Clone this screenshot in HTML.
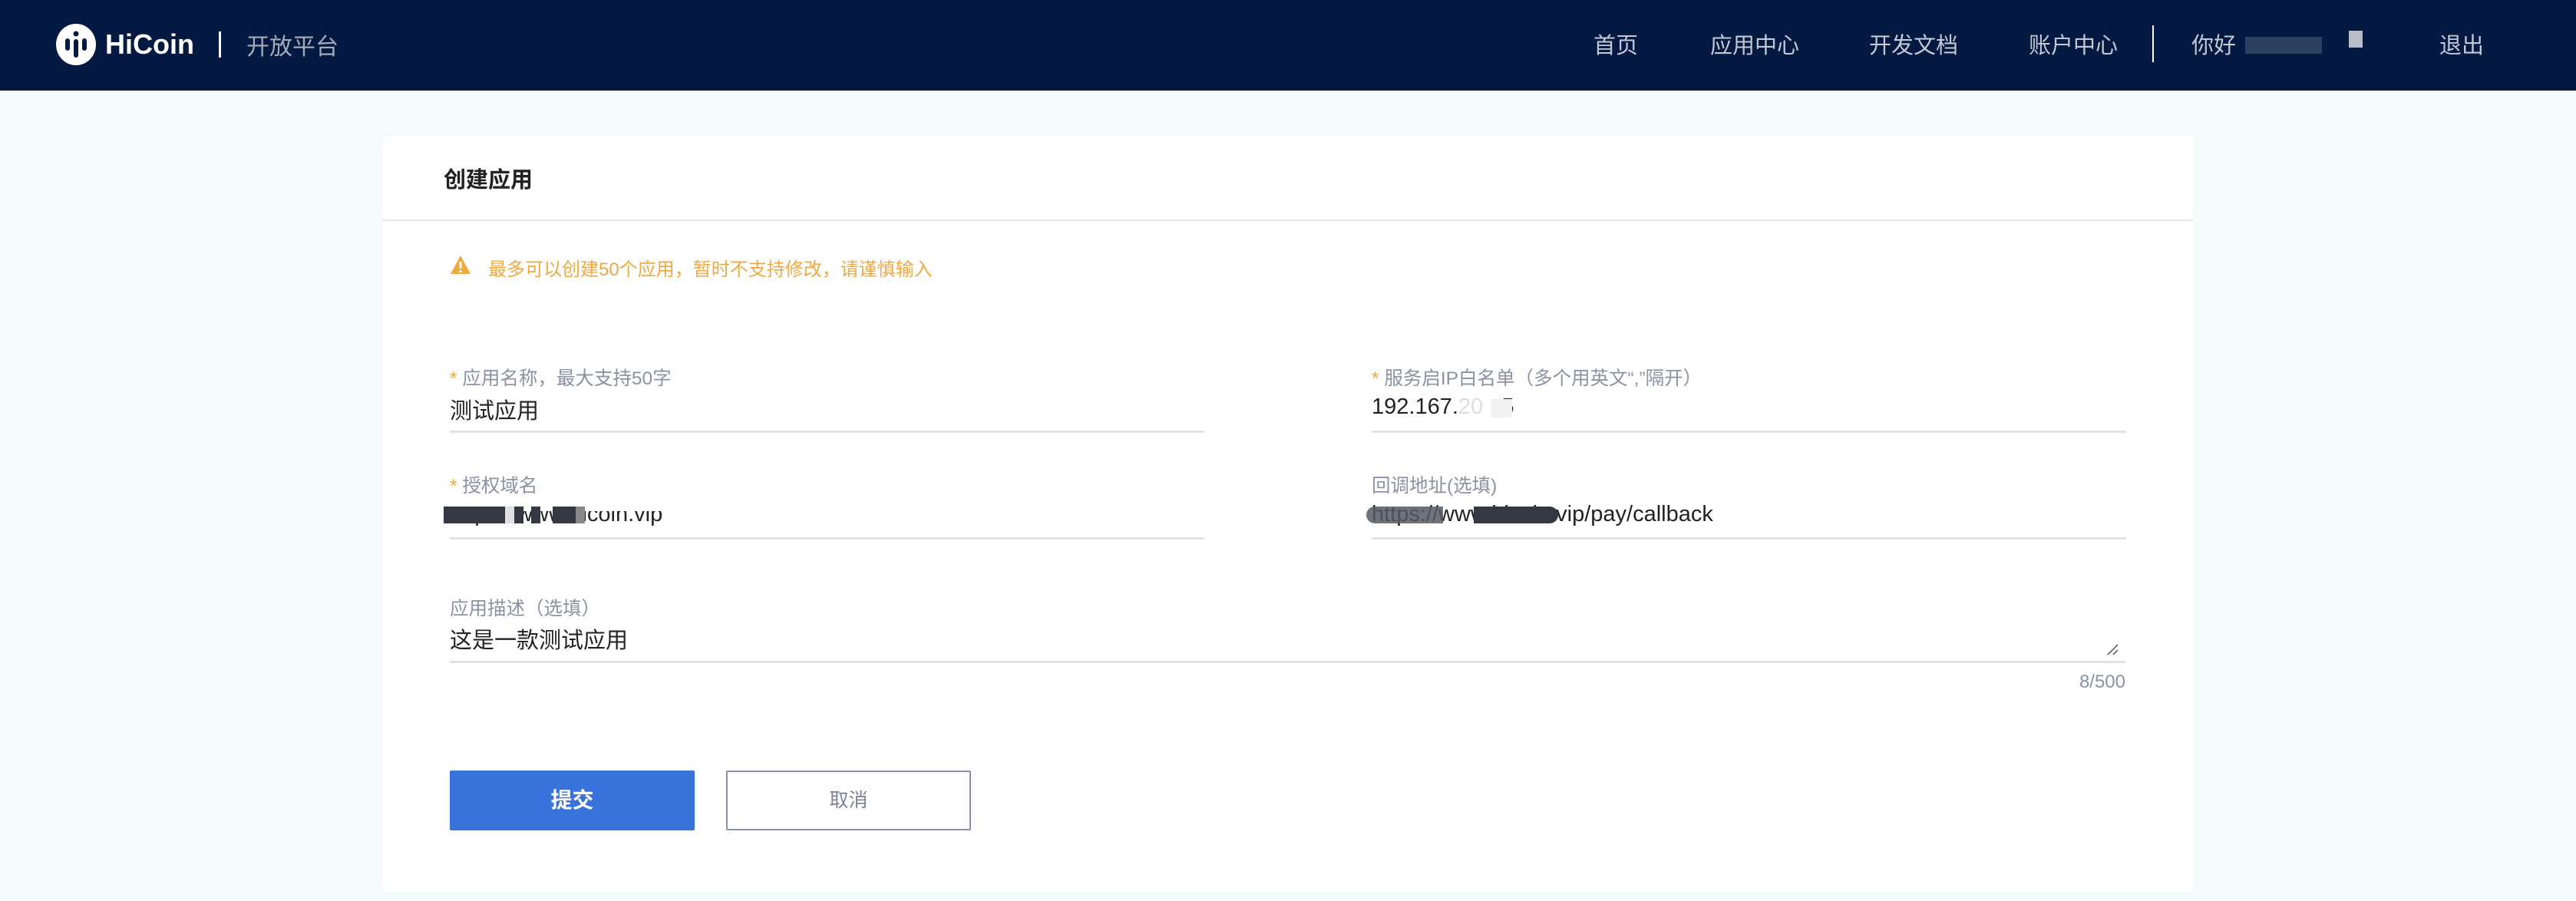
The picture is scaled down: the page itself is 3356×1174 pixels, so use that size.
<!DOCTYPE html>
<html><head><meta charset="utf-8"><style>
*{margin:0;padding:0;box-sizing:border-box}
body{width:3356px;height:1174px;background:#f5fafd;font-family:"Liberation Sans","Noto Sans CJK SC",sans-serif;position:relative;overflow:hidden}
.a{position:absolute;white-space:nowrap}
.hdr{position:absolute;left:0;top:0;width:3356px;height:118px;background:#041942}
.nav{color:#c3c8d3;font-size:29px;top:36px}
.card{position:absolute;left:499px;top:178px;width:2358px;height:984px;background:#fff}
.lbl{font-size:24.5px;color:#8a93a4}
.lbl b{color:#f0a940;font-weight:normal}
.val{font-size:29px;color:#222}
.ul{position:absolute;height:3px;background:#e2e2e2}
.blk{position:absolute;height:22px}
</style></head><body>
<div class="hdr"></div>
<svg class="a" style="left:71px;top:30px" width="56" height="56" viewBox="0 0 56 56">
<ellipse cx="28" cy="28" rx="26" ry="27" fill="#fff"/>
<rect x="14" y="20" width="6" height="16" rx="3" fill="#041942"/>
<circle cx="28" cy="14" r="3.5" fill="#041942"/>
<rect x="25" y="21" width="6" height="24" rx="3" fill="#041942"/>
<rect x="36" y="20" width="6" height="16" rx="3" fill="#041942"/>
</svg>
<div class="a" style="left:137px;top:37px;font-size:36px;font-weight:bold;color:#fff">HiCoin</div>
<div class="a" style="left:285px;top:41px;width:3px;height:34px;background:#fff"></div>
<div class="a" style="left:321px;top:36px;font-size:30px;color:#a3aab8">开放平台</div>
<div class="a nav" style="left:2076px">首页</div>
<div class="a nav" style="left:2228px">应用中心</div>
<div class="a nav" style="left:2435px">开发文档</div>
<div class="a nav" style="left:2643px">账户中心</div>
<div class="a" style="left:2804px;top:33px;width:2px;height:48px;background:#fff"></div>
<div class="a nav" style="left:2855px">你好</div>
<div class="a" style="left:2925px;top:48px;width:100px;height:22px;background:#4a5a78;opacity:.6"></div>
<div class="a" style="left:3060px;top:40px;width:18px;height:22px;background:#b8bec8"></div>
<div class="a nav" style="left:3178px">退出</div>

<div class="card"></div>
<div class="a" style="left:578px;top:211px;font-size:29px;font-weight:bold;color:#222">创建应用</div>
<div class="a" style="left:499px;top:286px;width:2358px;height:2px;background:#e6e6e6"></div>
<svg class="a" style="left:586px;top:332px" width="28" height="26" viewBox="0 0 28 26"><path d="M14 1 L27 25 L1 25 Z" fill="#f0a940"/><rect x="12.5" y="9" width="3" height="9" fill="#fff"/><rect x="12.5" y="20" width="3" height="3" fill="#fff"/></svg>
<div class="a" style="left:636px;top:331px;font-size:24px;color:#f0a940">最多可以创建50个应用，暂时不支持修改，请谨慎输入</div>

<div class="a lbl" style="left:586px;top:474px"><b>*</b> 应用名称，最大支持50字</div>
<div class="a val" style="left:586px;top:512px">测试应用</div>
<div class="ul" style="left:586px;top:561px;width:983px"></div>

<div class="a lbl" style="left:1787px;top:474px"><b>*</b> 服务启IP白名单（多个用英文“,”隔开）</div>
<div class="a val" style="left:1787px;top:514px">192.167.<span style="color:#ddd">20</span>&nbsp;&nbsp;&nbsp;5</div>
<div class="a" style="left:1942px;top:520px;width:28px;height:24px;background:#f2f2f2"></div>
<div class="ul" style="left:1787px;top:561px;width:983px"></div>

<div class="a lbl" style="left:586px;top:614px"><b>*</b> 授权域名</div>
<div class="a val" style="left:586px;top:654px;clip-path:inset(12px 0 0 0)">https://www.hicoin.vip</div>
<div class="blk" style="left:578px;top:660px;width:80px;background:#343842"></div>
<div class="blk" style="left:658px;top:660px;width:12px;background:#dfe0e2"></div>
<div class="blk" style="left:670px;top:660px;width:12px;background:#343842"></div>
<div class="blk" style="left:692px;top:660px;width:12px;background:#343842"></div>
<div class="blk" style="left:720px;top:660px;width:30px;background:#343842"></div>
<div class="blk" style="left:750px;top:660px;width:12px;background:#888"></div>
<div class="ul" style="left:586px;top:700px;width:983px"></div>

<div class="a lbl" style="left:1787px;top:614px">回调地址(选填)</div>
<div class="a val" style="left:1787px;top:654px">https://www.hicoin.vip/pay/callback</div>
<div class="blk" style="left:1780px;top:660px;width:100px;background:#555a63;border-radius:11px 0 0 11px;opacity:.85"></div>
<div class="blk" style="left:1920px;top:660px;width:110px;background:#343842;border-radius:0 11px 11px 0"></div>
<div class="ul" style="left:1787px;top:700px;width:983px"></div>

<div class="a lbl" style="left:586px;top:774px">应用描述（选填）</div>
<div class="a val" style="left:586px;top:811px">这是一款测试应用</div>
<svg class="a" style="left:2744px;top:838px" width="16" height="16" viewBox="0 0 16 16"><path d="M15 2 L2 15 M15 9 L9 15" stroke="#666" stroke-width="1.6"/></svg>
<div class="ul" style="left:586px;top:861px;width:2183px"></div>
<div class="a" style="left:2699px;top:875px;font-size:24px;color:#8a93a4;width:70px;text-align:right">8/500</div>

<div class="a" style="left:586px;top:1004px;width:319px;height:78px;background:#3a72db;border-radius:2px;color:#fff;font-size:28px;font-weight:bold;text-align:center;line-height:78px">提交</div>
<div class="a" style="left:946px;top:1004px;width:319px;height:78px;border:2px solid #8a93a4;border-radius:2px;color:#7a8394;font-size:25px;text-align:center;line-height:74px">取消</div>
</body></html>
